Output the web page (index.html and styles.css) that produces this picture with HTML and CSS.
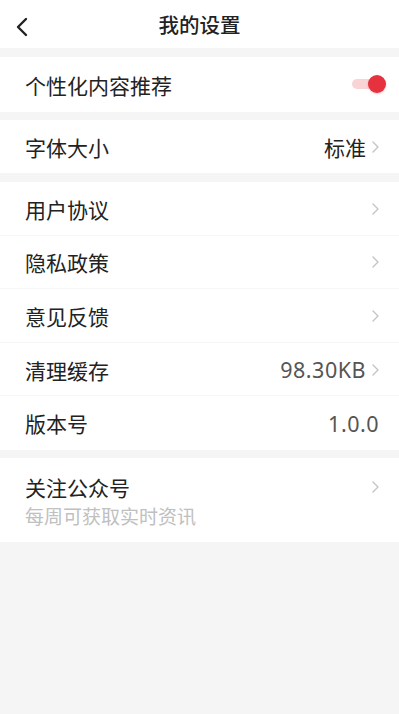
FILE: index.html
```html
<!DOCTYPE html>
<html lang="zh-CN">
<head>
<meta charset="utf-8">
<title>我的设置</title>
<link rel="stylesheet" href="styles.css">
</head>
<body>
<div class="page">
  <header class="topbar">
    <svg class="back" width="14" height="20" viewBox="0 0 14 20"><path d="M11 2 L3 10 L11 18" fill="none" stroke="#222" stroke-width="2.4" stroke-linecap="round" stroke-linejoin="round"/></svg>
    <h1 class="title">我的设置</h1>
  </header>

  <section class="group g1">
    <div class="row r-tall">
      <span class="label">个性化内容推荐</span>
      <span class="toggle"><span class="track"></span><span class="knob"></span></span>
    </div>
  </section>

  <section class="group g2">
    <div class="row">
      <span class="label">字体大小</span>
      <span class="right"><span class="value dark">标准</span><svg class="chev" width="7" height="12" viewBox="0 0 7 12"><path d="M1 1 L6 6 L1 11" fill="none" stroke="#c4c4c4" stroke-width="1.4" stroke-linecap="round" stroke-linejoin="round"/></svg></span>
    </div>
  </section>

  <section class="group g3">
    <div class="row line">
      <span class="label">用户协议</span>
      <span class="right"><svg class="chev" width="7" height="12" viewBox="0 0 7 12"><path d="M1 1 L6 6 L1 11" fill="none" stroke="#c4c4c4" stroke-width="1.4" stroke-linecap="round" stroke-linejoin="round"/></svg></span>
    </div>
    <div class="row line">
      <span class="label">隐私政策</span>
      <span class="right"><svg class="chev" width="7" height="12" viewBox="0 0 7 12"><path d="M1 1 L6 6 L1 11" fill="none" stroke="#c4c4c4" stroke-width="1.4" stroke-linecap="round" stroke-linejoin="round"/></svg></span>
    </div>
    <div class="row line">
      <span class="label">意见反馈</span>
      <span class="right"><svg class="chev" width="7" height="12" viewBox="0 0 7 12"><path d="M1 1 L6 6 L1 11" fill="none" stroke="#c4c4c4" stroke-width="1.4" stroke-linecap="round" stroke-linejoin="round"/></svg></span>
    </div>
    <div class="row line">
      <span class="label">清理缓存</span>
      <span class="right"><span class="value">98.30KB</span><svg class="chev" width="7" height="12" viewBox="0 0 7 12"><path d="M1 1 L6 6 L1 11" fill="none" stroke="#c4c4c4" stroke-width="1.4" stroke-linecap="round" stroke-linejoin="round"/></svg></span>
    </div>
    <div class="row">
      <span class="label">版本号</span>
      <span class="right"><span class="value">1.0.0</span></span>
    </div>
  </section>

  <section class="group g4">
    <div class="row r-sub">
      <div class="stack">
        <span class="label tight">关注公众号</span>
        <span class="sub">每周可获取实时资讯</span>
      </div>
      <span class="right top"><svg class="chev" width="7" height="12" viewBox="0 0 7 12"><path d="M1 1 L6 6 L1 11" fill="none" stroke="#c4c4c4" stroke-width="1.4" stroke-linecap="round" stroke-linejoin="round"/></svg></span>
    </div>
  </section>
</div>
</body>
</html>
```

FILE: styles.css
```css
* { box-sizing: border-box; }
html, body { margin: 0; padding: 0; }
body {
  background: #f5f5f5;
  font-family: "Noto Sans CJK SC", "Noto Sans", sans-serif;
  color: #222;
  width: 399px;
  min-height: 714px;
}
.page { display: flex; flex-direction: column; }

.topbar {
  height: 48px;
  background: #fff;
  display: flex;
  align-items: center;
  justify-content: center;
  position: relative;
}
.back { position: absolute; left: 15px; top: 17px; }
.title {
  margin: 0;
  font-size: 20.5px;
  font-weight: 500;
  color: #222;
  line-height: 1;
}

.group { background: #fff; }
.g1 { margin-top: 9px; }
.g2 { margin-top: 8px; }
.g3 { margin-top: 9px; }
.g4 { margin-top: 8px; }

.row {
  height: 53.6px;
  display: flex;
  align-items: center;
  justify-content: space-between;
  padding: 0 20px 0 25px;
  position: relative;
}
.g1 .row { height: 55px; }
.g2 .row { height: 53px; }
.row.line::after {
  content: "";
  position: absolute;
  left: 0; right: 0; bottom: 0;
  height: 1px;
  background: #f6f6f6;
}

.label {
  font-size: 21px;
  line-height: 28px;
  color: #222;
}
.label.tight { line-height: 30px; }
.right { display: flex; align-items: center; gap: 6px; }
.value {
  font-size: 21.5px;
  color: #555;
  font-family: "Noto Sans", "Noto Sans CJK SC", sans-serif;
  letter-spacing: 0.5px;
}
.value.dark { color: #222; font-family: "Noto Sans CJK SC", sans-serif; font-size: 21px; letter-spacing: 0; }
.chev { display: block; }

.toggle {
  position: relative;
  width: 34px;
  height: 18px;
  margin-right: -7px;
  margin-top: -2px;
}
.track {
  position: absolute;
  left: 0; top: 4px;
  width: 30px; height: 10px;
  border-radius: 5px;
  background: #f9d3d6;
}
.knob {
  position: absolute;
  right: 0; top: 0;
  width: 18px; height: 18px;
  border-radius: 50%;
  background: #e5323e;
  box-shadow: 0 1px 2px rgba(200,40,50,0.25);
}

.r-sub {
  height: 84px;
  align-items: flex-start;
  padding-top: 14px;
}
.stack { display: flex; flex-direction: column; }
.sub {
  font-size: 19px;
  line-height: 28px;
  color: #c0c0c0;
}
.right.top { height: 30px; }
```
